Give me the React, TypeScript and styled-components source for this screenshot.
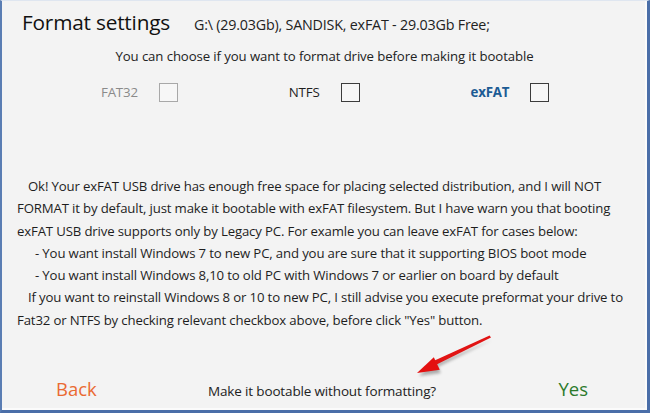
import React from 'react';
import styled, { createGlobalStyle } from 'styled-components';

const Global = createGlobalStyle`
  html, body { margin: 0; padding: 0; background: #f2f2f2; }
  #root { width: 650px; height: 413px; }
`;

const FONT = `"Open Sans", "Noto Sans", sans-serif`;

const Window = styled.div`
  position: relative;
  box-sizing: border-box;
  width: 650px;
  height: 413px;
  background: #f3f3f3;
  border-top: 1px solid #dfe6f0;
  border-left: 2px solid #5a7db3;
  border-right: 3px solid #4a6ea8;
  border-bottom: 3px solid #4a6ea8;
  box-shadow: inset -2px -2px 0 #fbfbfb;
  display: flex;
  flex-direction: column;
  font-family: ${FONT};
  color: #1e1e1e;
`;

const Header = styled.div`
  display: flex;
  align-items: baseline;
  gap: 24px;
  padding: 6px 0 0 20px;
`;

const Title = styled.h1`
  margin: 0;
  font-weight: 400;
  font-size: 20.8px;
  line-height: 30px;
  letter-spacing: -0.2px;
  color: #111;
`;

const DriveInfo = styled.span`
  font-size: 14.3px;
  letter-spacing: -0.2px;
  color: #222;
`;

const Prompt = styled.p`
  margin: 9px 0 0;
  text-align: center;
  font-size: 13.2px;
  line-height: 20px;
  letter-spacing: -0.1px;
  color: #222;
`;

const Options = styled.div`
  display: flex;
  align-items: center;
  gap: 111px;
  margin-top: 16px;
  padding-left: 99px;
  height: 20px;
`;

const Option = styled.label`
  display: flex;
  align-items: center;
  gap: 21px;
`;

const OptionLabel = styled.span<{ $tone: 'disabled' | 'normal' | 'current' }>`
  font-size: 13.3px;
  letter-spacing: -0.2px;
  color: ${(p) => (p.$tone === 'disabled' ? '#8a8a8a' : p.$tone === 'current' ? '#1c5b94' : '#1e1e1e')};
  font-weight: ${(p) => (p.$tone === 'current' ? 700 : 400)};
`;

const Box = styled.span<{ $disabled?: boolean }>`
  box-sizing: border-box;
  width: 19px;
  height: 19px;
  border: 1px solid ${(p) => (p.$disabled ? '#a8a8a8' : '#3c3c3c')};
  background: #f7f7f7;
`;

const Paragraph = styled.div`
  margin-top: 73px;
  padding-left: 15px;
  font-size: 13.2px;
  line-height: 22.3px;
  letter-spacing: -0.15px;
  color: #1e1e1e;
`;

const Line = styled.div<{ $indent: number }>`
  padding-left: ${(p) => p.$indent}px;
  white-space: nowrap;
`;

const Footer = styled.div`
  margin-top: auto;
  display: grid;
  grid-template-columns: 1fr auto 1fr;
  align-items: baseline;
  padding: 0 59px 6px 54px;
`;

const FooterButton = styled.span<{ $kind: 'back' | 'yes' }>`
  font-size: 18.5px;
  line-height: 30px;
  color: ${(p) => (p.$kind === 'back' ? '#ea6a32' : '#2b7a2b')};
  justify-self: ${(p) => (p.$kind === 'back' ? 'start' : 'end')};
`;

const Question = styled.span`
  font-size: 13.5px;
  letter-spacing: -0.15px;
  color: #222;
`;

const Arrow = styled.svg`
  position: absolute;
  left: 403px;
  top: 325px;
  width: 100px;
  height: 58px;
  overflow: visible;
`;

const lines: { indent: number; text: string }[] = [
  { indent: 11, text: 'Ok! Your exFAT USB drive has enough free space for placing selected distribution, and I will NOT' },
  { indent: 0, text: 'FORMAT it by default, just make it bootable with exFAT filesystem. But I have warn you that booting' },
  { indent: 0, text: 'exFAT USB drive supports only by Legacy PC. For examle you can leave exFAT for cases below:' },
  { indent: 18, text: '- You want install Windows 7 to new PC, and you are sure that it supporting BIOS boot mode' },
  { indent: 18, text: '- You want install Windows 8,10 to old PC with Windows 7 or earlier on board by default' },
  { indent: 11, text: 'If you want to reinstall Windows 8 or 10 to new PC, I still advise you execute preformat your drive to' },
  { indent: 0, text: 'Fat32 or NTFS by checking relevant checkbox above, before click "Yes" button.' },
];

export default function App() {
  return (
    <>
      <Global />
      <Window>
        <Header>
          <Title>Format settings</Title>
          <DriveInfo>G:\ (29.03Gb), SANDISK, exFAT - 29.03Gb Free;</DriveInfo>
        </Header>
        <Prompt>You can choose if you want to format drive before making it bootable</Prompt>
        <Options>
          <Option>
            <OptionLabel $tone="disabled">FAT32</OptionLabel>
            <Box $disabled />
          </Option>
          <Option>
            <OptionLabel $tone="normal">NTFS</OptionLabel>
            <Box />
          </Option>
          <Option>
            <OptionLabel $tone="current">exFAT</OptionLabel>
            <Box />
          </Option>
        </Options>
        <Paragraph>
          {lines.map((l, i) => (
            <Line key={i} $indent={l.indent}>{l.text}</Line>
          ))}
        </Paragraph>
        <Footer>
          <FooterButton $kind="back">Back</FooterButton>
          <Question>Make it bootable without formatting?</Question>
          <FooterButton $kind="yes">Yes</FooterButton>
        </Footer>
        <Arrow viewBox="0 0 100 58">
          <defs>
            <filter id="sh" x="-30%" y="-30%" width="160%" height="160%">
              <feGaussianBlur stdDeviation="1.6" />
            </filter>
          </defs>
          <g transform="translate(2,3)" opacity="0.45" filter="url(#sh)">
            <path d="M85 11 L31.8 37.4 L29.3 34.6 Z" fill="#555" />
            <polygon points="12,47 33.8,44 28,31" fill="#555" />
          </g>
          <path d="M86 11.5 L31.6 38.6 L29.6 34.4 L84.6 9.6 Z" fill="#e11414" />
          <polygon points="12,47 34.8,43.8 28.8,31.2" fill="#e41010" />
        </Arrow>
      </Window>
    </>
  );
}
